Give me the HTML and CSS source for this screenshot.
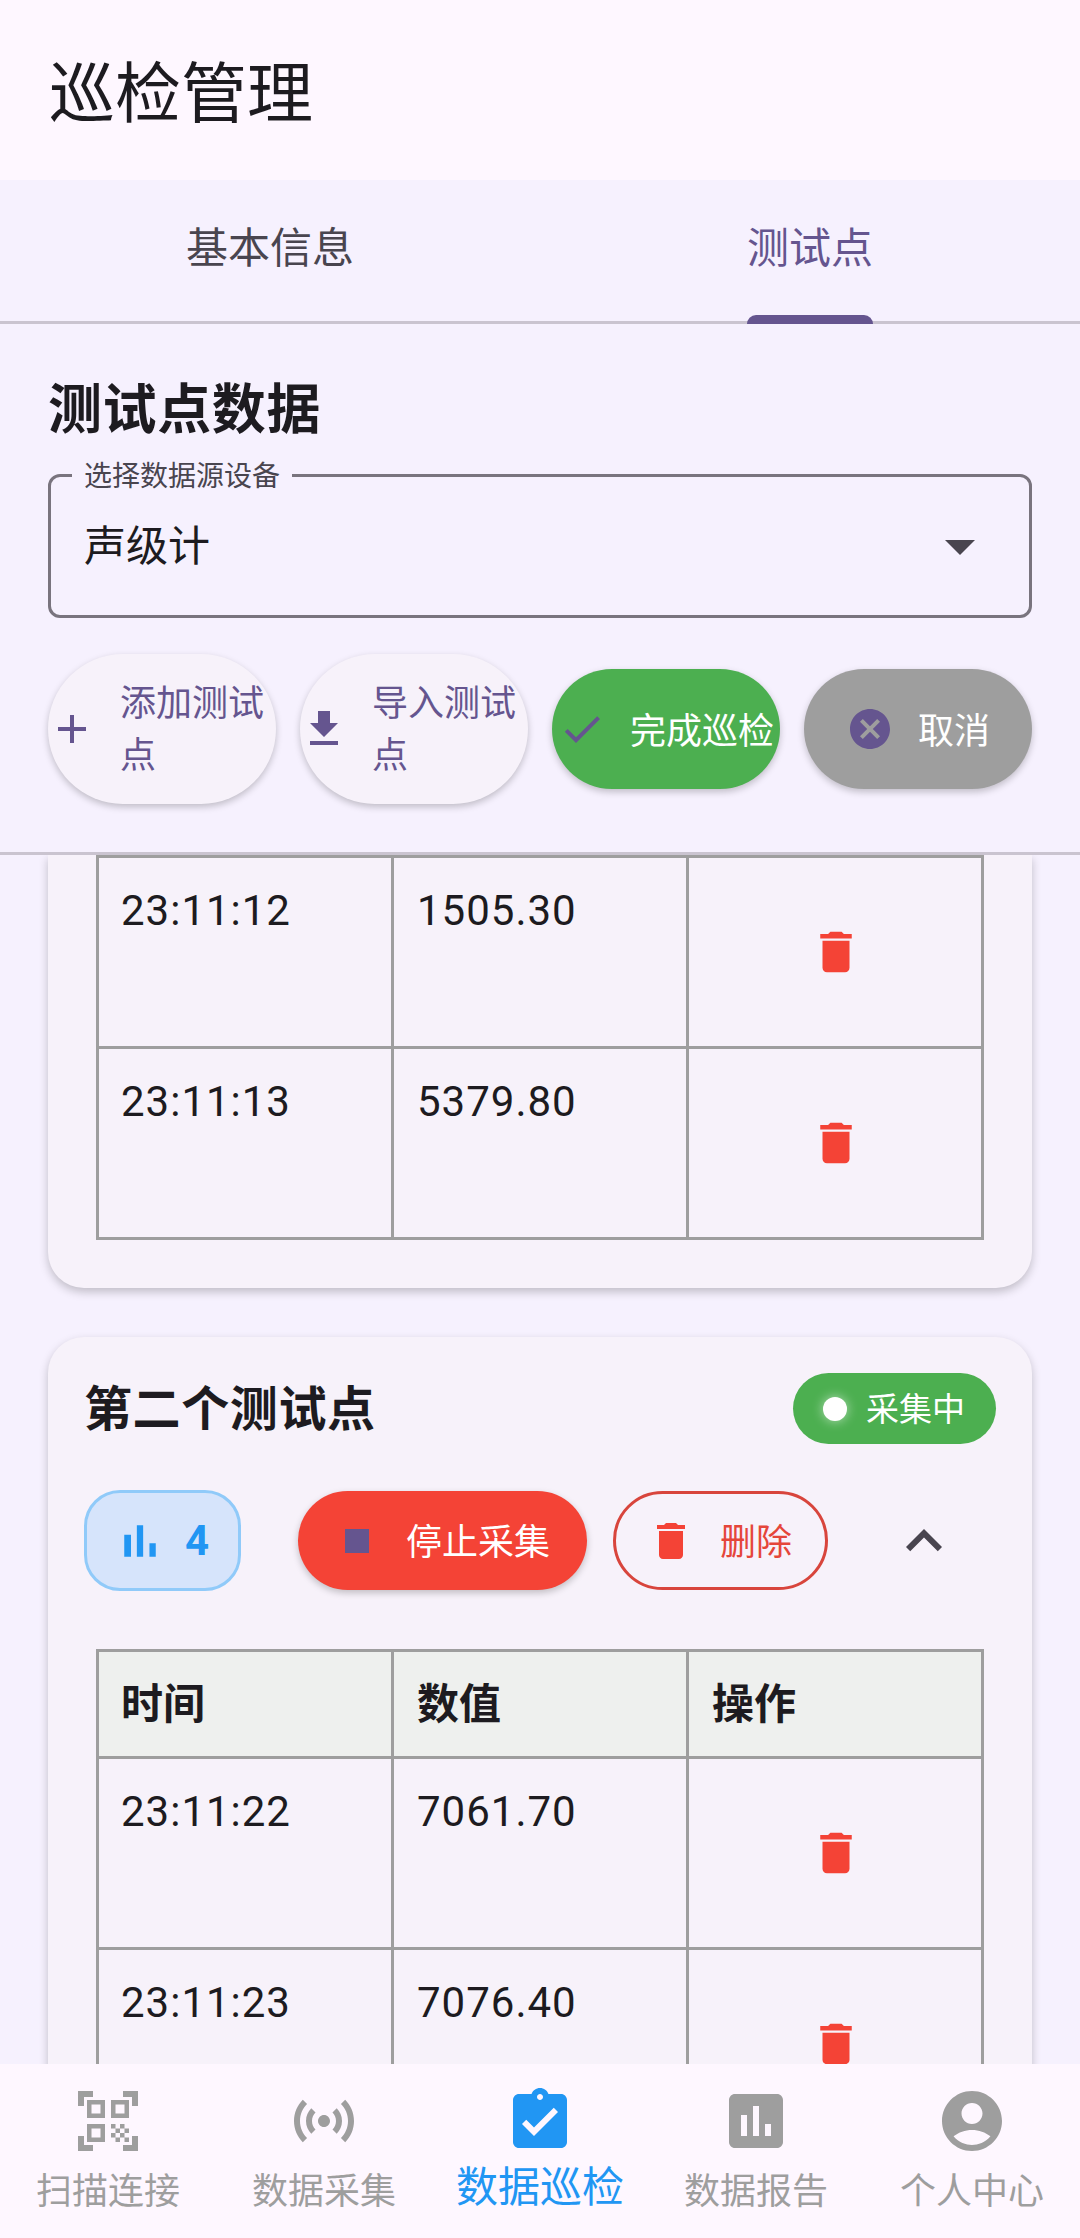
FILE: index.html
```html
<!DOCTYPE html>
<html lang="zh-CN">
<head>
<meta charset="utf-8"/>
<title>巡检管理</title>
<link rel="stylesheet" href="styles.css">
</head>
<body>
<svg class="sprite" xmlns="http://www.w3.org/2000/svg">
  <symbol id="i-delete" viewBox="0 0 24 24"><path d="M6 19c0 1.1.9 2 2 2h8c1.1 0 2-.9 2-2V7H6v12zM19 4h-3.5l-1-1h-5l-1 1H5v2h14V4z"/></symbol>
</svg>

<div class="app">
  <header class="appbar"><h1>巡检管理</h1></header>

  <nav class="tabs">
    <div class="tab"><span>基本信息</span></div>
    <div class="tab tab-on"><span>测试点</span></div>
  </nav>

  <section class="panel">
    <h2>测试点数据</h2>
    <div class="select">
      <span class="select-label">选择数据源设备</span>
      <span class="select-value">声级计</span>
      <svg class="icon-72 select-arrow" viewBox="0 0 24 24"><path d="M7 10l5 5 5-5z"/></svg>
    </div>
    <div class="actions">
      <button class="act act-light">
        <svg class="icon-48" viewBox="0 0 24 24"><path d="M19 13h-6v6h-2v-6H5v-2h6V5h2v6h6v2z"/></svg>
        <span>添加测试点</span>
      </button>
      <button class="act act-light">
        <svg class="icon-48" viewBox="0 0 24 24"><path d="M19 9h-4V3H9v6H5l7 7 7-7zM5 18v2h14v-2H5z"/></svg>
        <span>导入测试点</span>
      </button>
      <button class="act act-green">
        <svg class="icon-48" viewBox="0 0 24 24"><path d="M9 16.17 4.83 12l-1.42 1.41L9 19 21 7l-1.41-1.41z"/></svg>
        <span>完成巡检</span>
      </button>
      <button class="act act-gray">
        <svg class="icon-48" viewBox="0 0 24 24"><path d="M12 2C6.47 2 2 6.47 2 12s4.47 10 10 10 10-4.47 10-10S17.53 2 12 2zm5 13.59L15.59 17 12 13.41 8.41 17 7 15.59 10.59 12 7 8.41 8.41 7 12 10.59 15.59 7 17 8.41 13.41 12 17 15.59z"/></svg>
        <span>取消</span>
      </button>
    </div>
  </section>

  <main class="scroller">
    <!-- first card is scrolled, its top is out of view -->
    <div class="card card-cut">
      <table class="grid">
        <tr>
          <td>23:11:12</td><td>1505.30</td>
          <td class="cell-del"><svg class="icon-54"><use href="#i-delete"/></svg></td>
        </tr>
        <tr>
          <td>23:11:13</td><td>5379.80</td>
          <td class="cell-del"><svg class="icon-54"><use href="#i-delete"/></svg></td>
        </tr>
      </table>
    </div>

    <div class="card">
      <div class="card-head">
        <h3>第二个测试点</h3>
        <div class="badge"><i class="badge-dot"></i><span>采集中</span></div>
      </div>
      <div class="card-tools">
        <div class="count">
          <svg class="icon-54" viewBox="0 0 24 24"><path d="M5 9.2h3V19H5zM10.6 5h2.8v14h-2.8zm5.6 8H19v6h-2.8z"/></svg>
          <b>4</b>
        </div>
        <button class="tool tool-stop">
          <svg class="icon-48" viewBox="0 0 24 24"><path d="M6 6h12v12H6z"/></svg>
          <span>停止采集</span>
        </button>
        <button class="tool tool-del">
          <svg class="icon-48"><use href="#i-delete"/></svg>
          <span>删除</span>
        </button>
        <svg class="icon-72 chevron" viewBox="0 0 24 24"><path d="M12 8l-6 6 1.41 1.41L12 10.83l4.59 4.58L18 14z"/></svg>
      </div>
      <table class="grid">
        <tr class="grid-head"><th>时间</th><th>数值</th><th>操作</th></tr>
        <tr>
          <td>23:11:22</td><td>7061.70</td>
          <td class="cell-del"><svg class="icon-54"><use href="#i-delete"/></svg></td>
        </tr>
        <tr>
          <td>23:11:23</td><td>7076.40</td>
          <td class="cell-del"><svg class="icon-54"><use href="#i-delete"/></svg></td>
        </tr>
      </table>
    </div>
  </main>

  <footer class="bottom">
    <div class="nav-item">
      <svg class="icon-72" viewBox="0 0 24 24"><path d="M9.5,6.5v3h-3v-3H9.5 M11,5H5v6h6V5L11,5z M9.5,14.5v3h-3v-3H9.5 M11,13H5v6h6V13L11,13z M17.5,6.5v3h-3v-3H17.5 M19,5h-6v6h6V5L19,5z M13,13h1.5v1.5H13V13z M14.5,14.5H16V16h-1.5V14.5z M16,13h1.5v1.5H16V13z M13,16h1.5v1.5H13V16z M14.5,17.5H16V19h-1.5V17.5z M16,16h1.5v1.5H16V16z M17.5,14.5H19V16h-1.5V14.5z M17.5,17.5H19V19h-1.5V17.5z M22,7h-2V4h-3V2h5V7z M22,22v-5h-2v3h-3v2H22z M2,22h5v-2H4v-3H2V22z M2,2v5h2V4h3V2H2z"/></svg>
      <span>扫描连接</span>
    </div>
    <div class="nav-item">
      <svg class="icon-72" viewBox="0 0 24 24"><path d="M7.76 16.24C6.67 15.16 6 13.66 6 12s.67-3.16 1.76-4.24l1.42 1.42C8.45 9.9 8 10.9 8 12c0 1.1.45 2.1 1.17 2.83l-1.41 1.41zm8.48 0C17.33 15.16 18 13.66 18 12s-.67-3.16-1.76-4.24l-1.42 1.42C15.55 9.9 16 10.9 16 12c0 1.1-.45 2.1-1.17 2.83l1.41 1.41zM12 10c-1.1 0-2 .9-2 2s.9 2 2 2 2-.9 2-2-.9-2-2-2zm8 2c0 2.21-.9 4.21-2.35 5.65l1.42 1.42C20.88 17.26 22 14.76 22 12s-1.12-5.26-2.93-7.07l-1.42 1.42C19.1 7.79 20 9.79 20 12zM6.35 6.35L4.93 4.93C3.12 6.74 2 9.24 2 12s1.12 5.26 2.93 7.07l1.42-1.42C4.9 16.21 4 14.21 4 12s.9-4.21 2.35-5.65z"/></svg>
      <span>数据采集</span>
    </div>
    <div class="nav-item nav-on">
      <svg class="icon-72" viewBox="0 0 24 24"><path d="M19 3h-4.18C14.4 1.84 13.3 1 12 1c-1.3 0-2.4.84-2.82 2H5c-1.1 0-2 .9-2 2v14c0 1.1.9 2 2 2h14c1.1 0 2-.9 2-2V5c0-1.1-.9-2-2-2zm-7 0c.55 0 1 .45 1 1s-.45 1-1 1-1-.45-1-1 .45-1 1-1zm-2 14l-4-4 1.41-1.41L10 14.17l6.59-6.59L18 9l-8 8z"/></svg>
      <span>数据巡检</span>
    </div>
    <div class="nav-item">
      <svg class="icon-72" viewBox="0 0 24 24"><path d="M19 3H5c-1.1 0-2 .9-2 2v14c0 1.1.9 2 2 2h14c1.1 0 2-.9 2-2V5c0-1.1-.9-2-2-2zM9 17H7v-7h2v7zm4 0h-2V7h2v10zm4 0h-2v-4h2v4z"/></svg>
      <span>数据报告</span>
    </div>
    <div class="nav-item">
      <svg class="icon-72" viewBox="0 0 24 24"><path d="M12 2C6.48 2 2 6.48 2 12s4.48 10 10 10 10-4.48 10-10S17.52 2 12 2zm0 4c1.93 0 3.5 1.57 3.5 3.5S13.93 13 12 13s-3.5-1.57-3.5-3.5S10.07 6 12 6zm0 14c-2.03 0-4.43-.82-6.14-2.88C7.55 15.8 9.68 15 12 15s4.45.8 6.14 2.12C16.43 19.18 14.03 20 12 20z"/></svg>
      <span>个人中心</span>
    </div>
  </footer>
</div>
</body>
</html>
```

FILE: styles.css
```css
* {
  box-sizing: border-box;
}

html, body {
  margin: 0;
  height: 100%;
}

body {
  font-family: "Noto Sans CJK SC", Roboto, sans-serif;
  color: #1d1b20;
  background: #f6f1fe;
  overflow: hidden;
}

.sprite {
  display: none;
}

.app {
  display: flex;
  flex-direction: column;
  width: 1080px;
  height: 2238px;
  overflow: hidden;
}

.icon-48 {
  width: 48px;
  height: 48px;
  flex: none;
  fill: currentColor;
}

.icon-54 {
  width: 54px;
  height: 54px;
  flex: none;
  fill: currentColor;
}

.icon-72 {
  width: 72px;
  height: 72px;
  flex: none;
  fill: currentColor;
}

/* top bar */
.appbar {
  flex: none;
  display: flex;
  align-items: center;
  height: 180px;
  padding: 0 49px 4px;
  background: #fef7ff;
}

.appbar h1 {
  margin: 0;
  font-size: 66px;
  font-weight: 400;
  line-height: 88px;
}

/* tabs */
.tabs {
  flex: none;
  display: flex;
  height: 144px;
  border-bottom: 3px solid #cac4d0;
}

.tab {
  flex: 1;
  display: flex;
  justify-content: center;
  color: #49454f;
  font-size: 42px;
  line-height: 56px;
  padding-top: 37px;
}

.tab span {
  position: relative;
  height: 104px;
}

.tab-on {
  color: #65558f;
}

.tab-on span::after {
  content: "";
  position: absolute;
  left: 0;
  right: 0;
  bottom: -3px;
  height: 9px;
  background: #65558f;
  border-radius: 9px 9px 0 0;
}

/* fixed panel */
.panel {
  flex: none;
  padding: 47px 48px 48px;
  border-bottom: 3px solid #cac4d0;
}

.panel h2 {
  margin: 0 0 33px;
  font-size: 54px;
  font-weight: 700;
  line-height: 70px;
  letter-spacing: .6px;
}

.select {
  position: relative;
  display: flex;
  align-items: center;
  justify-content: space-between;
  height: 144px;
  padding: 0 33px;
  border: 3px solid #79747e;
  border-radius: 12px;
}

.select-label {
  position: absolute;
  left: 21px;
  top: -21px;
  padding: 0 12px;
  background: #f6f1fe;
  color: #49454f;
  font-size: 28px;
  line-height: 36px;
}

.select-value {
  margin-top: -6px;
  font-size: 42px;
  line-height: 56px;
}

.select-arrow {
  color: #49454f;
}

.actions {
  display: grid;
  grid-template-columns: repeat(4, 228px);
  gap: 24px;
  align-items: center;
  margin-top: 36px;
}

.act {
  display: flex;
  align-items: center;
  justify-content: center;
  gap: 24px;
  padding: 0 6px;
  border: 0;
  border-radius: 80px;
  font-family: inherit;
  font-size: 36px;
  line-height: 52px;
  text-align: left;
  color: #65558f;
  box-shadow: 0 3px 7px rgba(0, 0, 0, .22);
}

.act-light {
  justify-content: flex-start;
  height: 150px;
  padding: 0;
  background: #f7f2fa;
}

.act-light span {
  width: 146px;
  margin-top: -6px;
}

.act-green {
  height: 120px;
  background: #4caf50;
  color: #fff;
}

.act-gray {
  height: 120px;
  background: #9e9e9e;
  color: #fff;
}

.act-green span, .act-gray span {
  margin-top: -3px;
}

.act-green svg, .act-gray svg {
  color: #65558f;
}

/* scrolling list */
.scroller {
  flex: 1;
  min-height: 0;
  overflow: hidden;
}

.card {
  margin: 0 48px 49px;
  padding: 36px 36px 48px;
  background: #f7f2fa;
  border-radius: 36px;
  box-shadow: 0 4px 10px rgba(0, 0, 0, .22);
}

.card-cut {
  padding-top: 0;
  border-radius: 0 0 36px 36px;
}

.card-head {
  display: flex;
  align-items: center;
  justify-content: space-between;
}

.card-head h3 {
  margin: -8px 0 0;
  font-size: 48px;
  font-weight: 700;
  line-height: 64px;
  letter-spacing: .6px;
}

.badge {
  display: flex;
  align-items: center;
  gap: 19px;
  height: 71px;
  padding: 0 31px 0 30px;
  border-radius: 36px;
  background: #4caf50;
  color: #fff;
  font-size: 33px;
}

.badge span {
  margin-top: -3px;
}

.badge-dot {
  width: 24px;
  height: 24px;
  border-radius: 50%;
  background: #fff;
  box-shadow: 0 0 12px rgba(255, 255, 255, .6);
}

.card-tools {
  display: flex;
  align-items: center;
  margin: 46px 0 58px;
}

.count {
  display: flex;
  align-items: center;
  gap: 18px;
  width: 157px;
  height: 101px;
  padding-left: 26px;
  margin-right: 57px;
  border: 3px solid #90caf9;
  border-radius: 36px;
  background: #d6e4fb;
  color: #2196f3;
}

.count b {
  font-family: Roboto, sans-serif;
  font-size: 42px;
}

.tool {
  display: flex;
  align-items: center;
  gap: 25px;
  height: 99px;
  border-radius: 50px;
  font-family: inherit;
  font-size: 36px;
  line-height: 48px;
}

.tool span {
  margin-top: -3px;
}

.tool-stop {
  width: 289px;
  padding: 0 0 0 35px;
  border: 0;
  background: #f44336;
  color: #fff;
  box-shadow: 0 3px 7px rgba(0, 0, 0, .22);
  margin-right: 26px;
}

.tool-stop svg {
  color: #65558f;
}

.tool-del {
  width: 215px;
  padding: 0 0 0 31px;
  border: 3px solid #d8453c;
  background: transparent;
  color: #e5463a;
  margin-right: 26px;
}

.tool-del svg {
  color: #f44336;
}

.chevron {
  margin-left: 34px;
  color: #49454f;
}

/* data table */
.grid {
  width: 888px;
  margin: 0 12px;
  border-collapse: collapse;
  table-layout: fixed;
  font-size: 42px;
  line-height: 58px;
}

.grid td, .grid th {
  padding: 24px 21px 24px 23px;
  border: 3px solid #9e9e9e;
  text-align: left;
}

.grid td {
  height: 191px;
  vertical-align: top;
  font-family: Roboto, "Noto Sans CJK SC", sans-serif;
  letter-spacing: 1px;
}

.grid td:first-child, .grid th:first-child {
  padding-left: 22px;
}

.grid-head th {
  padding-top: 20px;
  padding-bottom: 26px;
  background: #eef0ee;
  font-weight: 700;
}

.grid td.cell-del {
  padding: 0 0 0 2px;
  vertical-align: middle;
  text-align: center;
  color: #f44336;
}

.cell-del svg {
  display: block;
  margin: 0 auto;
}

/* bottom navigation */
.bottom {
  flex: none;
  display: flex;
  height: 174px;
  padding-top: 21px;
  background: #fef7ff;
  position: relative;
}

.nav-item {
  flex: 1;
  display: flex;
  flex-direction: column;
  align-items: center;
  gap: 7px;
  color: #9e9e9e;
  font-size: 36px;
  line-height: 48px;
}

.nav-on {
  color: #2196f3;
  font-size: 42px;
  line-height: 40px;
}
```
